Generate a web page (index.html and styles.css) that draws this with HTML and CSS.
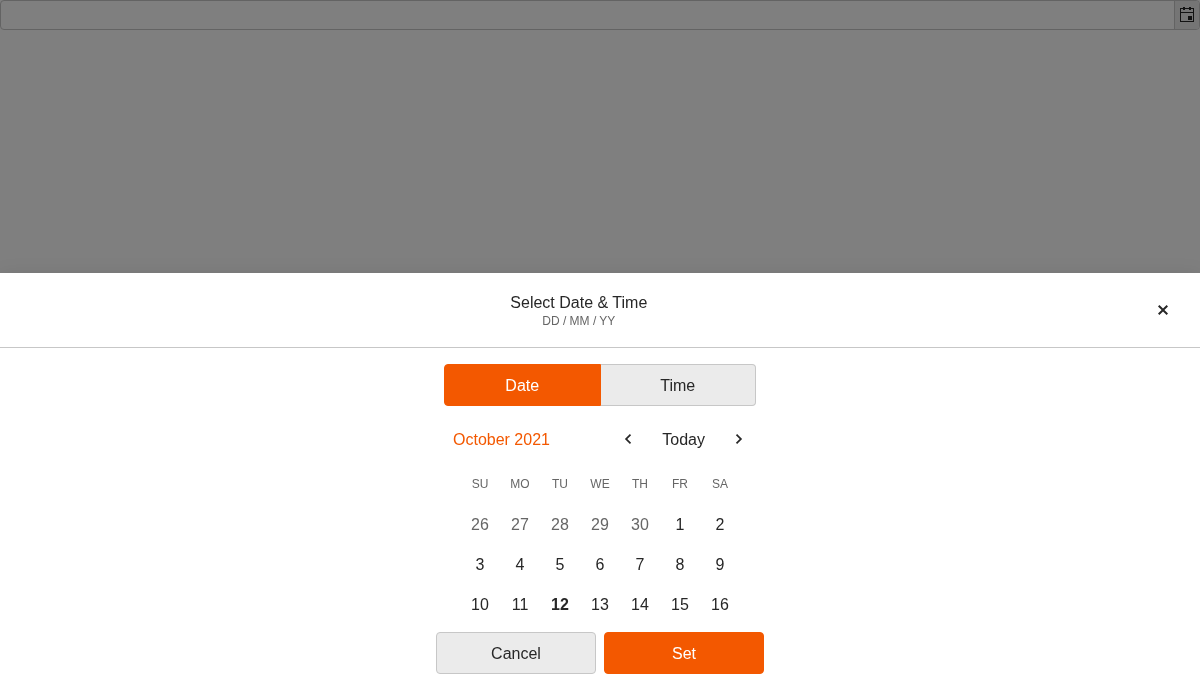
FILE: index.html
```html
<!DOCTYPE html>
<html lang="en">
<head>
<meta charset="utf-8">
<title>Select Date &amp; Time</title>
<link rel="stylesheet" href="styles.css">
</head>
<body>
<div class="picker">
  <span class="picker-input"></span>
  <span class="picker-button">
    <svg class="icon" viewBox="0 0 16 16"><path d="M12 1V0h-2v1H6V0H4v1H1v14h14V1h-3zm2 13H2V6h12v8zm0-9H2V2h2v1h2V2h4v1h2V2h2v3zM9 9h4v4H9z"/></svg>
  </span>
</div>
<div class="overlay"></div>
<section class="sheet">
  <header class="sheet-header">
    <div class="titles">
      <div class="title">Select Date &amp; Time</div>
      <div class="subtitle">DD / MM / YY</div>
    </div>
    <span class="close"><svg class="icon" viewBox="0 0 16 16"><path d="M13 4.4 11.6 3 8 6.6 4.4 3 3 4.4 6.6 8 3 11.6 4.4 13 8 9.4l3.6 3.6 1.4-1.4L9.4 8z"/></svg></span>
  </header>
  <div class="sheet-content">
    <div class="tabs">
      <button class="btn primary tab-date">Date</button>
      <button class="btn tab-time">Time</button>
    </div>
    <div class="cal-header">
      <span class="month">October 2021</span>
      <span class="nav">
        <span class="arrow"><svg class="icon" viewBox="0 0 16 16"><path d="M9.9 3 11.1 4.2 7.3 8l3.8 3.8L9.9 13l-5-5z"/></svg></span>
        <span class="today">Today</span>
        <span class="arrow"><svg class="icon" viewBox="0 0 16 16"><path d="M6.1 13 4.9 11.8 8.7 8 4.9 4.2 6.1 3l5 5z"/></svg></span>
      </span>
    </div>
    <div class="week names"><span>SU</span><span>MO</span><span>TU</span><span>WE</span><span>TH</span><span>FR</span><span>SA</span></div>
    <div class="week"><span class="other">26</span><span class="other">27</span><span class="other">28</span><span class="other">29</span><span class="other">30</span><span>1</span><span>2</span></div>
    <div class="week"><span>3</span><span>4</span><span>5</span><span>6</span><span>7</span><span>8</span><span>9</span></div>
    <div class="week"><span>10</span><span>11</span><span class="current">12</span><span>13</span><span>14</span><span>15</span><span>16</span></div>
  </div>
  <footer class="actions">
    <button class="btn">Cancel</button>
    <button class="btn primary">Set</button>
  </footer>
</section>
</body>
</html>
```
FILE: styles.css
```css
* { box-sizing: border-box; }
body {
  margin: 0;
  height: 682px;
  overflow: hidden;
  background: #fff;
  color: #272727;
  font: 16px/24px "Liberation Sans", Arial, sans-serif;
}
.icon { display: block; width: 16px; height: 16px; fill: currentColor; }
.picker {
  display: flex;
  height: 30px;
  border: 1px solid #c7c7c7;
  border-radius: 4px;
  background: #fff;
  overflow: hidden;
}
.picker-input { flex: 1; }
.picker-button {
  display: flex;
  align-items: center;
  justify-content: center;
  width: 25px;
  border-left: 1px solid #c7c7c7;
  background: #ebebeb;
}
.overlay { position: fixed; inset: 0; background: rgba(0, 0, 0, .5); }
.sheet {
  position: fixed;
  left: 0;
  right: 0;
  bottom: 0;
  height: 409px;
  display: flex;
  flex-direction: column;
  background: #fff;
  box-shadow: 0 5px 20px rgba(0, 0, 0, .13);
}
.sheet-header {
  display: flex;
  align-items: center;
  height: 75px;
  padding: 0 16px;
  border-bottom: 1px solid #c7c7c7;
}
.titles { flex: 1; padding: 3px .4px 0 0; text-align: center; }
.title { line-height: 20px; }
.subtitle { font-size: 12px; line-height: 17px; color: #666; }
.close { display: flex; justify-content: center; width: 42px; }
.sheet-content { width: 312px; margin: 0 auto; padding-top: 16px; }
.btn {
  width: 160px;
  height: 42px;
  padding: 2px 0 0;
  border: 1px solid #c7c7c7;
  border-radius: 4px;
  background: #ebebeb;
  color: #272727;
  font: inherit;
}
.primary { border-color: #f35800; background: #f35800; color: #fff; }
.tabs { display: flex; }
.tab-date, .tab-time { padding-right: .5px; }
.tab-date { width: 157px; border-radius: 4px 0 0 4px; }
.tab-time { width: 155px; border-left: 0; border-radius: 0 4px 4px 0; }
.cal-header {
  display: flex;
  align-items: center;
  justify-content: space-between;
  height: 42px;
  margin-top: 13px;
  padding: 0 9px;
}
.month { color: #f35800; }
.nav { display: flex; align-items: center; }
.arrow { display: block; padding-bottom: 2px; }
.today { margin: 0 26px; }
.week { display: grid; grid-template-columns: repeat(7, 40px); justify-content: center; line-height: 40px; text-align: center; }
.names { height: 41px; margin-top: 3px; font-size: 12px; color: #666; }
.other { color: #666; }
.current { font-weight: bold; }
.actions { display: flex; justify-content: center; gap: 8px; margin-top: auto; padding-bottom: 8px; }
```
